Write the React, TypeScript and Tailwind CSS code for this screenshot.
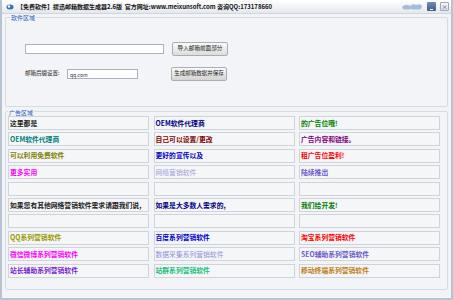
import React from 'react';

type Cell = { text: string; color: string; bold?: boolean };

const rows: Cell[][] = [
  [
    { text: '这里都是', color: 'text-[#222222]' },
    { text: 'OEM软件代理商', color: 'text-[#000080]' },
    { text: '的广告位哦!', color: 'text-[#008000]' },
  ],
  [
    { text: 'OEM软件代理商', color: 'text-[#008080]' },
    { text: '自己可以设置/更改', color: 'text-[#800000]' },
    { text: '广告内容和链接。', color: 'text-[#800080]' },
  ],
  [
    { text: '可以利用免费软件', color: 'text-[#808000]' },
    { text: '更好的宣传以及', color: 'text-[#0000cc]' },
    { text: '租广告位盈利!', color: 'text-[#ff0000]' },
  ],
  [
    { text: '更多实用', color: 'text-[#ff00ff]' },
    { text: '网络营销软件', color: 'text-[#a0a0d8]', bold: false },
    { text: '陆续推出', color: 'text-[#6a5acd]' },
  ],
  [
    { text: '', color: '' },
    { text: '', color: '' },
    { text: '', color: '' },
  ],
  [
    { text: '如果您有其他网络营销软件需求请跟我们说,', color: 'text-[#222222]' },
    { text: '如果是大多数人需求的,', color: 'text-[#000080]' },
    { text: '我们给开发!', color: 'text-[#008000]' },
  ],
  [
    { text: '', color: '' },
    { text: '', color: '' },
    { text: '', color: '' },
  ],
  [
    { text: 'QQ系列营销软件', color: 'text-[#999900]' },
    { text: '百度系列营销软件', color: 'text-[#0000cc]' },
    { text: '淘宝系列营销软件', color: 'text-[#ff0000]' },
  ],
  [
    { text: '微信微博系列营销软件', color: 'text-[#ff00ff]' },
    { text: '数据采集系列营销软件', color: 'text-[#9090d8]', bold: false },
    { text: 'SEO辅助系列营销软件', color: 'text-[#6a5acd]' },
  ],
  [
    { text: '站长辅助系列营销软件', color: 'text-[#7a1fd0]' },
    { text: '站群系列营销软件', color: 'text-[#20c080]' },
    { text: '移动终端系列营销软件', color: 'text-[#c08020]' },
  ],
];

const font = "font-['Noto_Sans_CJK_SC',sans-serif]";

export default function App() {
  return (
    <div className={`w-[453px] h-[300px] overflow-hidden bg-[#f2f4f7] border-l-2 border-r-2 border-b-2 border-[#b7c3d1] flex flex-col ${font}`}>
      {/* Title bar */}
      <div className="h-[14px] flex items-center bg-gradient-to-b from-[#ffffff] to-[#e4e8ee] border-b border-[#d0d6de]">
        <svg width="10" height="8" viewBox="0 0 10 8" className="ml-[3px]">
          <ellipse cx="5" cy="4" rx="3.5" ry="2.5" fill="#3a6ea5" />
          <circle cx="4" cy="3.5" r="1.2" fill="#ffffff" />
        </svg>
        <span className="ml-[2px] text-[6px] leading-none font-bold text-[#111] whitespace-nowrap">
          【免费软件】提迅邮箱数据生成器2.6版&nbsp; 官方网址:www.meixunsoft.com 咨询QQ:173178660
        </span>
        <div className="ml-auto flex items-center gap-[4px] pr-[2px]">
          <svg width="22" height="9" viewBox="0 0 22 9">
            <path d="M1 5 Q5 1 9 4 Q12 1 15 3 Q19 1 21 4 L20 7 Q15 8 10 7 Q5 8 2 7 Z" fill="#8fb0d4" opacity="0.8" />
          </svg>
          <div className="w-[9px] h-[9px] bg-gradient-to-b from-[#6f8fb6] to-[#3f5f88] rounded-[1px] flex items-end justify-center pb-[1px]">
            <div className="w-[3px] h-[1px] bg-white" />
          </div>
          <div className="w-[9px] h-[9px] bg-gradient-to-b from-[#f4f6f9] to-[#d8dee6] border border-[#9aaabc] rounded-[1px] flex items-center justify-center text-[6px] leading-none text-[#40526a]">
            ×
          </div>
        </div>
      </div>

      {/* 软件区域 */}
      <div className="relative mx-[3px] mt-[3px] h-[90px] border border-[#d6dbe2] rounded-[2px]">
        <span className="absolute -top-[3px] left-[4px] bg-[#f2f4f7] px-[1px] text-[6px] leading-none text-[#2a62b8]">软件区域</span>
        <div className="flex items-center mt-[24px] ml-[19px]">
          <div className="w-[139px] h-[10px] bg-white border border-[#a9b2bd]" />
          <button className="ml-[8px] w-[56px] h-[14px] border border-[#a8aeb5] rounded-[2px] bg-gradient-to-b from-[#fafafa] to-[#dcdcdc] text-[5.6px] leading-none text-[#222] whitespace-nowrap">
            导入邮箱前面部分
          </button>
        </div>
        <div className="flex items-center mt-[11px] ml-[19px]">
          <span className="w-[42px] text-[5.5px] leading-none text-[#222] whitespace-nowrap">邮箱后缀设置:</span>
          <div className="w-[71px] h-[10px] bg-white border border-[#a9b2bd] flex items-center pl-[2px] text-[5px] leading-none text-[#333]">
            qq.com
          </div>
          <button className="ml-[33px] w-[56px] h-[14px] border border-[#a8aeb5] rounded-[2px] bg-gradient-to-b from-[#fafafa] to-[#d4d4d4] text-[5.5px] leading-none text-[#222] whitespace-nowrap">
            生成邮箱数据并保存
          </button>
        </div>
      </div>

      {/* 广告区域 */}
      <div className="relative mx-[3px] mt-[4px] h-[179px] border border-[#d6dbe2] rounded-[2px]">
        <span className="absolute -top-[2px] left-[2px] bg-[#f2f4f7] px-[1px] text-[6px] leading-none text-[#2a62b8]">广告区域</span>
        <div className="grid grid-cols-[141px_141px_141px] gap-x-[4.5px] gap-y-[2.4px] ml-[2px] mt-[4px]">
          {rows.flat().map((c, i) => (
            <div
              key={i}
              className={`h-[14px] flex items-center pl-[1px] border border-[#cfd4da] bg-[#f5f6f8] text-[6.8px] leading-none whitespace-nowrap overflow-hidden ${c.color} ${c.bold === false ? 'font-normal' : 'font-bold'}`}
            >
              {c.text}
            </div>
          ))}
        </div>
      </div>
    </div>
  );
}
